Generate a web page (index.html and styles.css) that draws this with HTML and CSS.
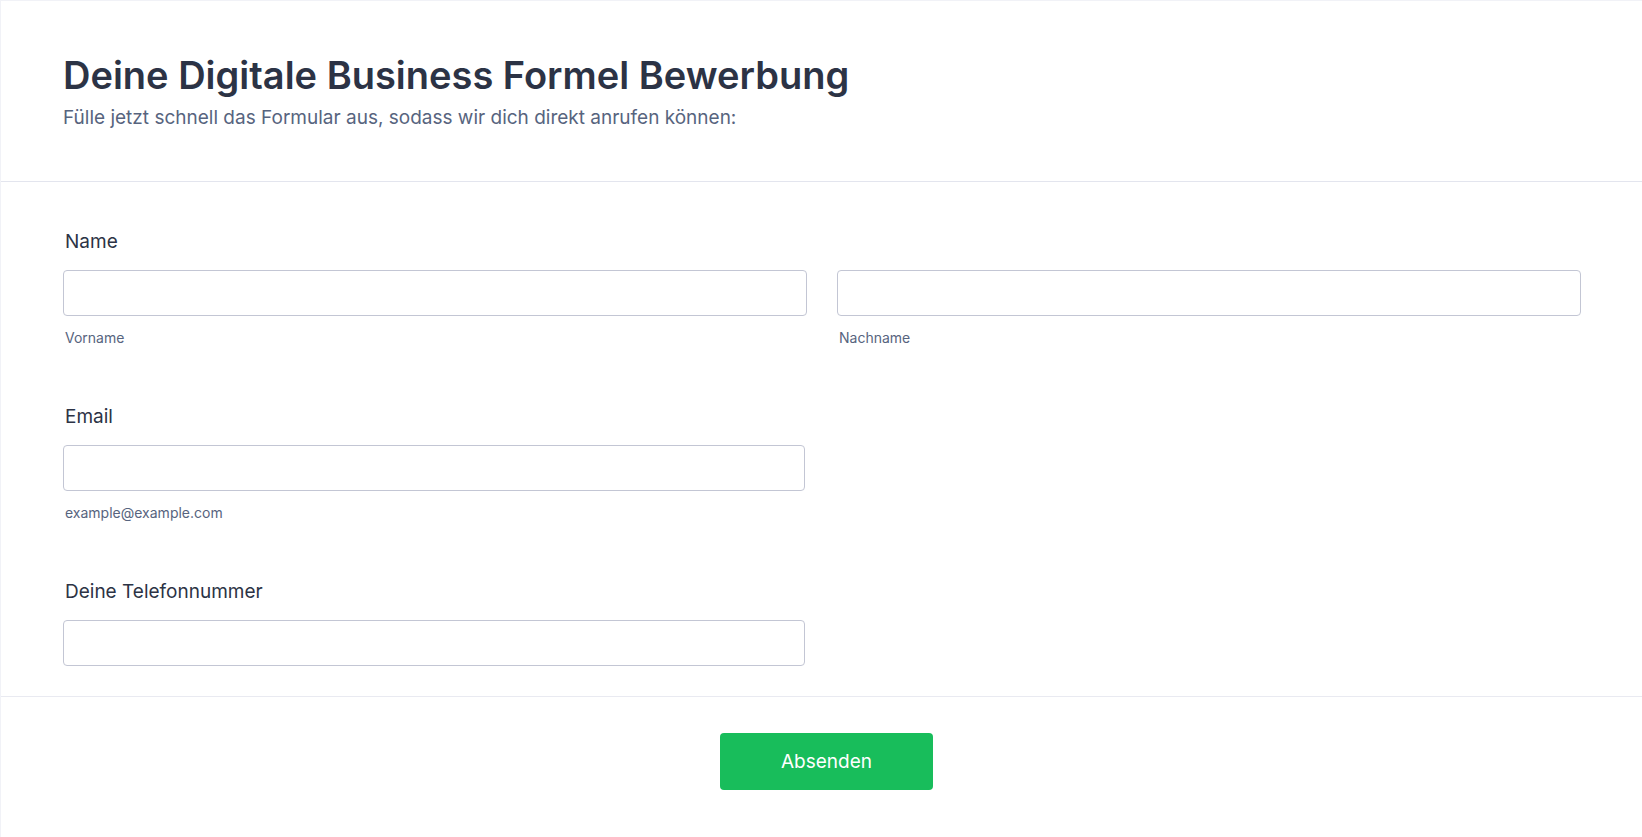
FILE: index.html
```html
<!DOCTYPE html>
<html lang="de">
<head>
<meta charset="utf-8">
<title>Deine Digitale Business Formel Bewerbung</title>
<link rel="stylesheet" href="styles.css">
</head>
<body>
<form class="card">
  <header class="form-header">
    <h1 class="title">Deine Digitale Business Formel Bewerbung</h1>
    <p class="subtitle">Fülle jetzt schnell das Formular aus, sodass wir dich direkt anrufen können:</p>
  </header>
  <section class="fields">
    <div class="field">
      <label class="label">Name</label>
      <div class="row">
        <div class="col">
          <input class="input" type="text">
          <span class="sublabel">Vorname</span>
        </div>
        <div class="col">
          <input class="input" type="text">
          <span class="sublabel">Nachname</span>
        </div>
      </div>
    </div>
    <div class="field">
      <label class="label">Email</label>
      <div class="row">
        <div class="col narrow">
          <input class="input" type="email">
          <span class="sublabel">example@example.com</span>
        </div>
      </div>
    </div>
    <div class="field last">
      <label class="label">Deine Telefonnummer</label>
      <div class="row">
        <div class="col narrow">
          <input class="input" type="tel">
        </div>
      </div>
    </div>
  </section>
  <footer class="form-footer">
    <button class="submit" type="button">Absenden</button>
  </footer>
</form>
</body>
</html>
```

FILE: styles.css
```css
* { box-sizing: border-box; }
html, body { margin: 0; padding: 0; background: #ffffff; }
body {
  font-family: Inter, "Noto Sans", "Liberation Sans", sans-serif;
  color: #2c3345;
}
.card {
  display: block;
  min-height: 837px;
  border-top: 1px solid #f1f2f7;
  border-left: 1px solid #f1f2f7;
  background: #ffffff;
}
.form-header {
  padding: 52px 62px 51px 62px;
  border-bottom: 1px solid #e3e5ee;
}
.title {
  margin: 0;
  font-size: 38px;
  line-height: 44px;
  font-weight: 600;
  color: #2c3345;
}
.subtitle {
  margin: 9px 0 0 0;
  font-size: 19px;
  line-height: 24px;
  color: #57647e;
}
.fields {
  padding: 48px 61px 30px 62px;
  border-bottom: 1px solid #e9eaf1;
}
.field { margin-bottom: 58px; }
.field.last { margin-bottom: 0; }
.label {
  display: block;
  margin-left: 2px;
  font-size: 19px;
  line-height: 24px;
  font-weight: 400;
  color: #2c3345;
}
.row {
  display: grid;
  grid-template-columns: 1fr 1fr;
  column-gap: 30px;
  margin-top: 16px;
}
.col { display: flex; flex-direction: column; }
.col.narrow { margin-right: 2px; }
.input {
  display: block;
  width: 100%;
  height: 46px;
  border: 1px solid #c3c6d4;
  border-radius: 4px;
  background: #ffffff;
  font: inherit;
}
.sublabel {
  display: block;
  margin: 13px 0 0 2px;
  font-size: 14px;
  line-height: 18px;
  color: #57647e;
}
.form-footer {
  display: flex;
  justify-content: center;
  padding: 36px 0 0 10px;
}
.submit {
  width: 213px;
  height: 57px;
  border: none;
  border-radius: 4px;
  background: #18bd5b;
  color: #ffffff;
  font-family: Inter, "Noto Sans", "Liberation Sans", sans-serif;
  font-size: 19px;
  font-weight: 400;
}
```
